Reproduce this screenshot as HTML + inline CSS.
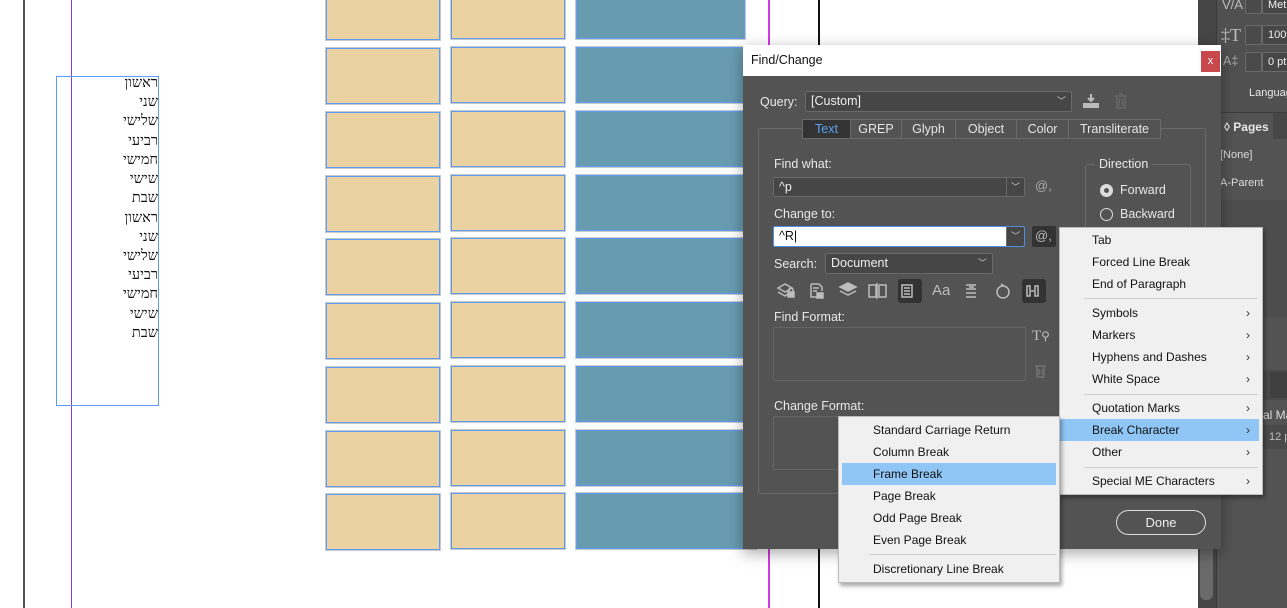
<!DOCTYPE html>
<html><head><meta charset="utf-8"><style>
*{margin:0;padding:0;box-sizing:border-box}
body{width:1287px;height:608px;overflow:hidden;background:#fff;position:relative;font-family:"Liberation Sans","DejaVu Sans",sans-serif;font-size:12px;white-space:nowrap}
.a{position:absolute}
.bx{position:absolute;border:1px solid #5c9cf5;outline:1px solid #c9c9c9}
.t{background:#ebd2a2}.b{background:#699bb0}
.heb{position:absolute;left:56px;width:102px;text-align:right;font-size:14.5px;color:#111;direction:rtl;font-family:"Liberation Serif","DejaVu Serif",serif}
.lt{position:absolute;color:#e8e8e8;font-size:12.5px}
.inp{position:absolute;background:#464646;border:1px solid #6a6a6a;border-radius:2px;color:#eee;font-size:12.5px;padding:2px 0 0 5px;overflow:hidden}
.dd{position:absolute;right:0;top:0;bottom:0;width:18px;border-left:1px solid #6a6a6a;color:#ccc;text-align:center;font-size:9px;line-height:18px}
.tab{position:absolute;top:119px;height:20px;border:1px solid #6a6a6a;background:#535353;color:#e6e6e6;font-size:12.5px;text-align:center;line-height:18px}
.menu{position:absolute;background:#f0f0f0;border:1px solid #bbb;box-shadow:2px 3px 4px rgba(0,0,0,.35)}
.mi{position:absolute;left:0;right:0;height:22px;line-height:22px;font-size:12px;color:#111}
.mi span.ar{position:absolute;right:12px;color:#333}
.sep{position:absolute;height:1px;background:#cfcfcf}
</style></head><body>
<div class="a" style="left:23px;top:0;width:2px;height:608px;background:#555"></div>
<div class="a" style="left:71px;top:0;width:1px;height:608px;background:#8a3ce0"></div>
<div class="a" style="left:768px;top:0;width:2px;height:608px;background:#d13ae0"></div>
<div class="a" style="left:818px;top:0;width:2px;height:608px;background:#111"></div>
<div class="a" style="left:56px;top:76px;width:103px;height:330px;border:1px solid #5c9cf5"></div>
<div class="heb" style="top:75px">ראשון</div>
<div class="heb" style="top:94px">שני</div>
<div class="heb" style="top:113px">שלישי</div>
<div class="heb" style="top:133px">רביעי</div>
<div class="heb" style="top:152px">חמישי</div>
<div class="heb" style="top:171px">שישי</div>
<div class="heb" style="top:190px">שבת</div>
<div class="heb" style="top:210px">ראשון</div>
<div class="heb" style="top:229px">שני</div>
<div class="heb" style="top:248px">שלישי</div>
<div class="heb" style="top:267px">רביעי</div>
<div class="heb" style="top:286px">חמישי</div>
<div class="heb" style="top:306px">שישי</div>
<div class="heb" style="top:325px">שבת</div>
<div class="bx t" style="left:326px;top:-5px;width:114px;height:45px"></div>
<div class="bx t" style="left:451px;top:-5px;width:114px;height:44px"></div>
<div class="bx b" style="left:576px;top:-5px;width:169px;height:44px"></div>
<div class="bx t" style="left:326px;top:48px;width:114px;height:56px"></div><div class="bx t" style="left:451px;top:47px;width:114px;height:56px"></div><div class="bx b" style="left:576px;top:47px;width:180px;height:56px"></div>
<div class="bx t" style="left:326px;top:112px;width:114px;height:56px"></div><div class="bx t" style="left:451px;top:111px;width:114px;height:56px"></div><div class="bx b" style="left:576px;top:111px;width:180px;height:56px"></div>
<div class="bx t" style="left:326px;top:176px;width:114px;height:56px"></div><div class="bx t" style="left:451px;top:175px;width:114px;height:56px"></div><div class="bx b" style="left:576px;top:175px;width:180px;height:56px"></div>
<div class="bx t" style="left:326px;top:239px;width:114px;height:56px"></div><div class="bx t" style="left:451px;top:238px;width:114px;height:56px"></div><div class="bx b" style="left:576px;top:238px;width:180px;height:56px"></div>
<div class="bx t" style="left:326px;top:303px;width:114px;height:56px"></div><div class="bx t" style="left:451px;top:302px;width:114px;height:56px"></div><div class="bx b" style="left:576px;top:302px;width:180px;height:56px"></div>
<div class="bx t" style="left:326px;top:367px;width:114px;height:56px"></div><div class="bx t" style="left:451px;top:366px;width:114px;height:56px"></div><div class="bx b" style="left:576px;top:366px;width:180px;height:56px"></div>
<div class="bx t" style="left:326px;top:431px;width:114px;height:56px"></div><div class="bx t" style="left:451px;top:430px;width:114px;height:56px"></div><div class="bx b" style="left:576px;top:430px;width:180px;height:56px"></div>
<div class="bx t" style="left:326px;top:494px;width:114px;height:56px"></div><div class="bx t" style="left:451px;top:493px;width:114px;height:56px"></div><div class="bx b" style="left:576px;top:493px;width:180px;height:56px"></div>
<div class="a" style="left:1198px;top:0;width:18px;height:608px;background:#454545"></div>
<div class="a" style="left:1200px;top:490px;width:13px;height:110px;background:#6a6a6a;border-radius:6px"></div>
<div class="a" style="left:1216px;top:0;width:71px;height:608px;background:#535353;border-left:1px solid #3a3a3a;overflow:hidden">
<div class="a" style="left:0;top:0;width:71px;height:112px;background:#505050"></div>
<div class="lt" style="left:5px;top:-3px;font-size:13px;color:#bbb">V/A</div>
<div class="a" style="left:28px;top:-2px;width:17px;height:16px;border:1px solid #6a6a6a;background:#4a4a4a;border-radius:2px"></div>
<div class="inp" style="left:45px;top:-3px;width:40px;height:17px;font-size:11px;padding-top:1px">Metric</div>
<div class="lt" style="left:4px;top:25px;font-size:18px;color:#bbb;font-family:'Liberation Serif',serif">‡T</div>
<div class="a" style="left:28px;top:25px;width:17px;height:20px;border:1px solid #6a6a6a;background:#4a4a4a;border-radius:2px"></div>
<div class="inp" style="left:45px;top:25px;width:40px;height:20px;font-size:11px;padding-top:3px">100%</div>
<div class="lt" style="left:6px;top:54px;color:#aaa">A‡</div>
<div class="a" style="left:28px;top:52px;width:17px;height:20px;border:1px solid #6a6a6a;background:#4a4a4a;border-radius:2px"></div>
<div class="inp" style="left:45px;top:52px;width:40px;height:20px;font-size:11px;padding-top:3px">0 pt</div>
<div class="lt" style="left:32px;top:87px;font-size:11px">Languag</div>
<div class="a" style="left:0;top:112px;width:71px;height:1px;background:#3d3d3d"></div>
<div class="a" style="left:56px;top:113px;width:15px;height:26px;background:#474747"></div>
<div class="lt" style="left:7px;top:120px;font-weight:bold;font-size:12px">◊ Pages</div>
<div class="lt" style="left:3px;top:149px;font-size:11px;color:#ddd">[None]</div>
<div class="lt" style="left:3px;top:177px;font-size:11px;color:#ddd">A-Parent</div>
<div class="a" style="left:0;top:200px;width:71px;height:118px;background:#4d4d4d"></div>
<div class="a" style="left:0;top:370px;width:71px;height:30px;background:#4a4a4a"></div>
<div class="a" style="left:53px;top:372px;width:18px;height:26px;background:#3f3f3f"></div>
<div class="lt" style="left:46px;top:408px;font-size:12px;color:#ddd">al Ma</div>
<div class="a" style="left:44px;top:425px;width:27px;height:24px;background:#4a4a4a;border-radius:2px"></div>
<div class="lt" style="left:52px;top:431px;font-size:11px;color:#bbb">12 p</div>
</div>
<div class="a" style="left:743px;top:45px;width:478px;height:504px;background:#535353;box-shadow:0 4px 14px rgba(0,0,0,.35)"></div>
<div class="a" style="left:743px;top:45px;width:478px;height:31px;background:#fff"></div>
<div class="a" style="left:751px;top:53px;font-size:12.5px;color:#111">Find/Change</div>
<div class="a" style="left:1201px;top:51px;width:19px;height:21px;background:#c8484c;color:#fff;font-size:11px;text-align:center;line-height:20px">x</div>
<div class="lt" style="left:760px;top:95px">Query:</div>
<div class="inp" style="left:805px;top:91px;width:267px;height:21px">[Custom]<span style="position:absolute;right:5px;top:2px;font-size:9px;color:#ccc">﹀</span></div>
<svg class="a" style="left:1082px;top:93px" width="20" height="16"><path d="M9 1v7M6 5l3 3 3-3" stroke="#bbb" stroke-width="2" fill="none"/><rect x="1" y="10" width="16" height="5" fill="#bbb"/></svg>
<svg class="a" style="left:1114px;top:93px" width="14" height="16"><path d="M1 3h12M5 1h4M3 4v11h8V4M5.5 6v7M8.5 6v7" stroke="#6a6a6a" stroke-width="1.3" fill="none"/></svg>
<div class="a" style="left:758px;top:128px;width:448px;height:366px;border:1px solid #6a6a6a;border-radius:3px"></div>
<div class="tab" style="left:802px;width:49px;background:#333;color:#5aa3f0">Text</div>
<div class="tab" style="left:850px;width:52px">GREP</div>
<div class="tab" style="left:901px;width:55px">Glyph</div>
<div class="tab" style="left:955px;width:62px">Object</div>
<div class="tab" style="left:1016px;width:53px">Color</div>
<div class="tab" style="left:1068px;width:93px">Transliterate</div>
<div class="lt" style="left:774px;top:157px">Find what:</div>
<div class="inp" style="left:773px;top:177px;width:252px;height:20px">^p<div class="dd">﹀</div></div>
<div class="lt" style="left:1035px;top:178px;color:#aaa;font-size:13px">@,</div>
<div class="a" style="left:1085px;top:164px;width:106px;height:70px;border:1px solid #6a6a6a;border-radius:3px"></div>
<div class="lt" style="left:1095px;top:157px;background:#535353;padding:0 4px">Direction</div>
<div class="a" style="left:1100px;top:184px;width:13px;height:13px;border-radius:50%;background:#ddd;border:3px solid #ddd"><div style="width:5px;height:5px;margin:1px;border-radius:50%;background:#555"></div></div>
<div class="lt" style="left:1120px;top:183px">Forward</div>
<div class="a" style="left:1100px;top:208px;width:13px;height:13px;border-radius:50%;border:1px solid #ddd"></div>
<div class="lt" style="left:1120px;top:207px">Backward</div>
<div class="lt" style="left:774px;top:207px">Change to:</div>
<div class="inp" style="left:773px;top:226px;width:252px;height:21px;background:#fff;border-color:#4e8fe0;color:#111">^R|<div class="dd" style="background:#464646;border-left-color:#6a6a6a">﹀</div></div>
<div class="a" style="left:1032px;top:226px;width:24px;height:21px;background:#333;border-radius:2px;color:#bbb;font-size:13px;padding:2px 0 0 3px">@,</div>
<div class="lt" style="left:774px;top:257px">Search:</div>
<div class="inp" style="left:825px;top:253px;width:168px;height:21px">Document<span style="position:absolute;right:5px;top:2px;font-size:9px;color:#ccc">﹀</span></div>
<div class="a" style="left:898px;top:279px;width:24px;height:24px;background:#333;border-radius:3px"></div>
<div class="a" style="left:1022px;top:279px;width:24px;height:24px;background:#333;border-radius:3px"></div>
<svg class="a" style="left:776px;top:281px" width="280" height="20" fill="none" stroke="#bdbdbd" stroke-width="1.5">
<path d="M2 7l7-4 7 4-7 4zM2 11l7 4 3-2"/><rect x="12" y="11" width="6" height="5" fill="#bdbdbd"/><path d="M13 11v-2a2 2 0 0 1 4 0v2"/>
<path d="M35 3h8l3 3v4M35 3v13h7M37 7h6M37 10h4"/><rect x="41" y="12" width="6" height="5" fill="#bdbdbd"/>
<path d="M64 6l8-4 8 4-8 4z" fill="#bdbdbd"/><path d="M64 10l8 4 8-4"/>
<path d="M93 4h7v12h-7zM103 4h7v12h-7zM101 2v16"/>
<path d="M126 4h10v12h-10zM128 7h6M128 10h6M128 13h6"/>
<path d="M190 4h10M190 8h10M190 12h10M190 16h10M193 6h5"/>
<circle cx="227" cy="11" r="6"/><path d="M225 3l3 2"/>
<path d="M251 5h3v10h-3zM259 5h3v10h-3zM255 10h3"/>
</svg>
<div class="lt" style="left:932px;top:282px;font-size:15px;color:#bdbdbd">Aa</div>
<div class="lt" style="left:774px;top:310px">Find Format:</div>
<div class="a" style="left:773px;top:327px;width:253px;height:54px;border:1px solid #646464"></div>
<div class="lt" style="left:1032px;top:328px;color:#bdbdbd;font-size:15px;font-family:'Liberation Serif',serif">T<span style="font-size:12px">⚲</span></div>
<svg class="a" style="left:1034px;top:364px" width="13" height="14"><path d="M1 2h11M3 3v10h7V3M5 5v6M8 5v6" stroke="#777" stroke-width="1.3" fill="none"/></svg>
<div class="lt" style="left:774px;top:399px">Change Format:</div>
<div class="a" style="left:773px;top:416px;width:70px;height:54px;border:1px solid #646464"></div>
<div class="a" style="left:1116px;top:510px;width:90px;height:25px;border:1px solid #ddd;border-radius:13px;color:#eee;font-size:13px;text-align:center;line-height:23px">Done</div>
<div class="menu" style="left:1059px;top:227px;width:204px;height:268px">
<div class="mi" style="top:1px;padding-left:32px">Tab</div>
<div class="mi" style="top:23px;padding-left:32px">Forced Line Break</div>
<div class="mi" style="top:45px;padding-left:32px">End of Paragraph</div>
<div class="sep" style="top:70px;left:24px;right:4px"></div>
<div class="mi" style="top:74px;padding-left:32px">Symbols<span class="ar">›</span></div>
<div class="mi" style="top:96px;padding-left:32px">Markers<span class="ar">›</span></div>
<div class="mi" style="top:118px;padding-left:32px">Hyphens and Dashes<span class="ar">›</span></div>
<div class="mi" style="top:140px;padding-left:32px">White Space<span class="ar">›</span></div>
<div class="sep" style="top:166px;left:24px;right:4px"></div>
<div class="mi" style="top:169px;padding-left:32px">Quotation Marks<span class="ar">›</span></div>
<div class="mi" style="top:191px;padding-left:32px;background:#90c6f5;right:3px">Break Character<span class="ar" style="right:9px">›</span></div>
<div class="mi" style="top:213px;padding-left:32px">Other<span class="ar">›</span></div>
<div class="sep" style="top:239px;left:24px;right:4px"></div>
<div class="mi" style="top:242px;padding-left:32px">Special ME Characters<span class="ar">›</span></div>
</div>
<div class="menu" style="left:838px;top:416px;width:222px;height:167px">
<div class="mi" style="top:2px;padding-left:34px">Standard Carriage Return</div>
<div class="mi" style="top:24px;padding-left:34px">Column Break</div>
<div class="mi" style="top:46px;left:3px;right:3px;background:#90c6f5;padding-left:31px">Frame Break</div>
<div class="mi" style="top:68px;padding-left:34px">Page Break</div>
<div class="mi" style="top:90px;padding-left:34px">Odd Page Break</div>
<div class="mi" style="top:112px;padding-left:34px">Even Page Break</div>
<div class="sep" style="top:137px;left:30px;right:3px"></div>
<div class="mi" style="top:141px;padding-left:34px">Discretionary Line Break</div>
</div>
</body></html>
